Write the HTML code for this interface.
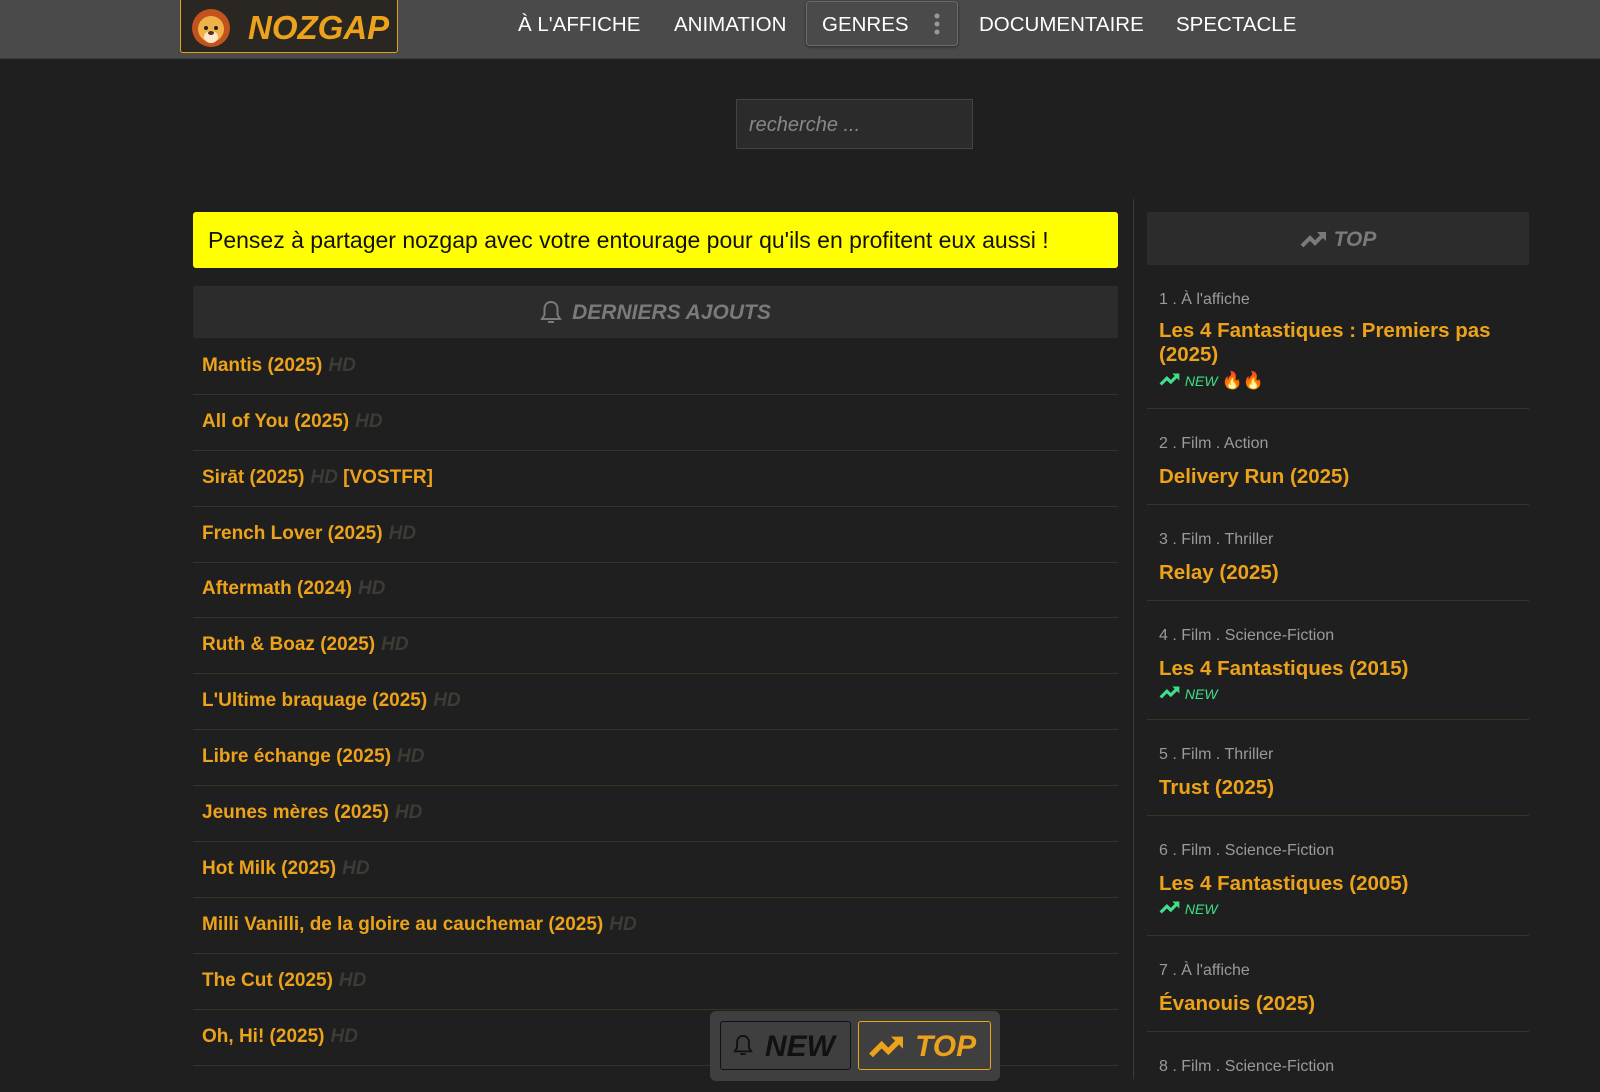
<!DOCTYPE html>
<html><head><meta charset="utf-8"><style>
*{margin:0;padding:0;box-sizing:border-box}
body{width:1600px;height:1079px;overflow:hidden;background:#1f1f1f;font-family:"Liberation Sans",Arial,sans-serif;position:relative}
.nav{position:absolute;left:0;top:0;width:1600px;height:59px;background:#4a4a4a;border-bottom:1px solid #3a3a3a}
.logo{position:absolute;left:180px;top:-2px;width:218px;height:55px;background:#2a2723;border:1px solid #e6a01a;border-radius:0 0 3px 3px}
.logo span{position:absolute;left:67px;top:10px;font-size:33px;font-weight:bold;font-style:italic;color:#eca21a}
.ni{position:absolute;top:13px;color:#fff;font-size:20.5px}
.genres{position:absolute;left:806px;top:1px;width:152px;height:45px;border:1px solid #6a6a6a;border-radius:4px;background:#4a4a4a;box-shadow:0 1px 3px rgba(0,0,0,.4)}
.search{position:absolute;left:736px;top:99px;width:237px;height:50px;background:#2b2b2b;border:1px solid #444;color:#888;font-size:20px;font-style:italic;padding:14px 12px}
.banner{position:absolute;left:193px;top:212px;width:925px;height:56px;background:#ffff00;border-radius:3px;font-size:23px;color:#111;padding:15px 15px}
.hdr{position:absolute;background:#2c2c2c;color:#7a7a7a;font-size:21px;font-weight:bold;font-style:italic;text-align:center}
.row{position:absolute;left:193px;width:925px;height:56px;border-bottom:1px solid #3b3226;font-size:19px;font-weight:bold;color:#eca21a;padding-left:9px;line-height:20px;padding-top:17px}
.hd{color:#3e3b36;font-style:italic;font-weight:bold;margin-left:6px}
.vd{position:absolute;left:1133px;top:199px;width:1px;height:880px;background:#3a3a3a}
.it{position:absolute;left:1147px;width:382px;border-bottom:1px solid #3b3226;padding-left:12px}
.cat{color:#9a9a9a;font-size:16px;margin-top:26px}
.tt{color:#eca21a;font-size:20.5px;font-weight:bold;margin-top:12px;line-height:24px}
.nw{color:#3ee08a;font-size:14px;font-style:italic;margin-top:4px}
.nw .f{font-style:normal;font-size:17px}
.float{position:absolute;left:710px;top:1011px;width:290px;height:70px;background:#3f3f3f;border-radius:6px}
</style></head><body>
<div class="nav">
 <div class="logo">
  <svg style="position:absolute;left:9px;top:8px" width="42" height="42" viewBox="0 0 42 42"><circle cx="21" cy="21" r="19" fill="#c2531c"/><circle cx="21" cy="22" r="13" fill="#f2b24a"/><ellipse cx="21" cy="30" rx="7" ry="6" fill="#fbe8c8"/><circle cx="16" cy="21" r="2" fill="#222"/><circle cx="26" cy="21" r="2" fill="#222"/><ellipse cx="21" cy="26" rx="3" ry="2" fill="#5a2c1c"/></svg>
  <span>NOZGAP</span>
 </div>
 <div class="ni" style="left:518px">À L'AFFICHE</div>
 <div class="ni" style="left:674px">ANIMATION</div>
 <div class="genres"><div class="ni" style="left:15px;top:11px">GENRES</div>
  <svg style="position:absolute;left:126px;top:11px" width="8" height="24"><circle cx="4" cy="3" r="2.5" fill="#999"/><circle cx="4" cy="11" r="2.5" fill="#999"/><circle cx="4" cy="19" r="2.5" fill="#999"/></svg></div>
 <div class="ni" style="left:979px">DOCUMENTAIRE</div>
 <div class="ni" style="left:1176px">SPECTACLE</div>
</div>
<div class="search">recherche ...</div>
<div class="banner">Pensez à partager nozgap avec votre entourage pour qu'ils en profitent eux aussi !</div>
<div class="hdr" style="left:193px;top:286px;width:925px;height:52px;line-height:54px">
 <svg width="22" height="26" viewBox="0 0 22 26" style="vertical-align:-6px;margin-right:10px"><path d="M11 3c-4 0-6.5 3-6.5 7v6L2 20h18l-2.5-4v-6c0-4-2.5-7-6.5-7z" fill="none" stroke="#7a7a7a" stroke-width="2"/><path d="M8 23h6" stroke="#7a7a7a" stroke-width="2"/></svg>DERNIERS AJOUTS</div>
<div class="row" style="top:339px">Mantis (2025)<span class="hd">HD</span></div>
<div class="row" style="top:395px">All of You (2025)<span class="hd">HD</span></div>
<div class="row" style="top:451px">Sirāt (2025)<span class="hd">HD</span> [VOSTFR]</div>
<div class="row" style="top:507px">French Lover (2025)<span class="hd">HD</span></div>
<div class="row" style="top:562px">Aftermath (2024)<span class="hd">HD</span></div>
<div class="row" style="top:618px">Ruth &amp; Boaz (2025)<span class="hd">HD</span></div>
<div class="row" style="top:674px">L'Ultime braquage (2025)<span class="hd">HD</span></div>
<div class="row" style="top:730px">Libre échange (2025)<span class="hd">HD</span></div>
<div class="row" style="top:786px">Jeunes mères (2025)<span class="hd">HD</span></div>
<div class="row" style="top:842px">Hot Milk (2025)<span class="hd">HD</span></div>
<div class="row" style="top:898px">Milli Vanilli, de la gloire au cauchemar (2025)<span class="hd">HD</span></div>
<div class="row" style="top:954px">The Cut (2025)<span class="hd">HD</span></div>
<div class="row" style="top:1010px">Oh, Hi! (2025)<span class="hd">HD</span></div>
<div class="vd"></div>
<div class="hdr" style="left:1147px;top:212px;width:382px;height:53px;line-height:55px">
 <svg width="28" height="18" viewBox="0 0 28 18" style="vertical-align:-2px;margin-right:6px"><path d="M2 16l8-8 5 5 9-9" fill="none" stroke="#7a7a7a" stroke-width="4"/><path d="M17 2h9v9z" fill="#7a7a7a"/></svg>TOP</div>
<div class="it" style="top:282px;height:127px"><div class="cat" style="margin-top:9px">1 . À l'affiche</div><div class="tt" style="margin-top:10px">Les 4 Fantastiques : Premiers pas (2025)</div><div class="nw"><svg width="22" height="14" viewBox="0 0 28 18"><path d="M2 16l8-8 5 5 9-9" fill="none" stroke="#3ee08a" stroke-width="4"/><path d="M17 2h9v9z" fill="#3ee08a"/></svg> NEW <span class="f">🔥🔥</span></div></div>
<div class="it" style="top:409px;height:96px"><div class="cat">2 . Film . Action</div><div class="tt">Delivery Run (2025)</div></div>
<div class="it" style="top:505px;height:96px"><div class="cat">3 . Film . Thriller</div><div class="tt">Relay (2025)</div></div>
<div class="it" style="top:601px;height:119px"><div class="cat">4 . Film . Science-Fiction</div><div class="tt">Les 4 Fantastiques (2015)</div><div class="nw"><svg width="22" height="14" viewBox="0 0 28 18"><path d="M2 16l8-8 5 5 9-9" fill="none" stroke="#3ee08a" stroke-width="4"/><path d="M17 2h9v9z" fill="#3ee08a"/></svg> NEW</div></div>
<div class="it" style="top:720px;height:96px"><div class="cat">5 . Film . Thriller</div><div class="tt">Trust (2025)</div></div>
<div class="it" style="top:816px;height:120px"><div class="cat">6 . Film . Science-Fiction</div><div class="tt">Les 4 Fantastiques (2005)</div><div class="nw"><svg width="22" height="14" viewBox="0 0 28 18"><path d="M2 16l8-8 5 5 9-9" fill="none" stroke="#3ee08a" stroke-width="4"/><path d="M17 2h9v9z" fill="#3ee08a"/></svg> NEW</div></div>
<div class="it" style="top:936px;height:96px"><div class="cat">7 . À l'affiche</div><div class="tt">Évanouis (2025)</div></div>
<div class="it" style="top:1032px;height:60px;border:none"><div class="cat">8 . Film . Science-Fiction</div></div>
<div class="float">
 <div style="position:absolute;left:10px;top:10px;width:131px;height:49px;border:1px solid #111;border-radius:3px;font-size:30px;font-weight:bold;font-style:italic;color:#111;padding:8px 0 0 12px">
  <svg width="20" height="28" viewBox="0 0 22 26" style="vertical-align:-3px;margin-right:12px"><path d="M11 3c-4 0-6.5 3-6.5 7v6L2 20h18l-2.5-4v-6c0-4-2.5-7-6.5-7z" fill="none" stroke="#111" stroke-width="2"/><path d="M8 23h6" stroke="#111" stroke-width="2"/></svg>NEW</div>
 <div style="position:absolute;left:148px;top:10px;width:133px;height:49px;border:1px solid #eca21a;border-radius:3px;font-size:30px;font-weight:bold;font-style:italic;color:#eca21a;padding:8px 0 0 8px">
  <svg width="40" height="24" viewBox="0 0 28 18" style="vertical-align:-2px;margin-right:8px"><path d="M2 16l8-8 5 5 9-9" fill="none" stroke="#eca21a" stroke-width="4"/><path d="M17 2h9v9z" fill="#eca21a"/></svg>TOP</div>
</div>
</body></html>
